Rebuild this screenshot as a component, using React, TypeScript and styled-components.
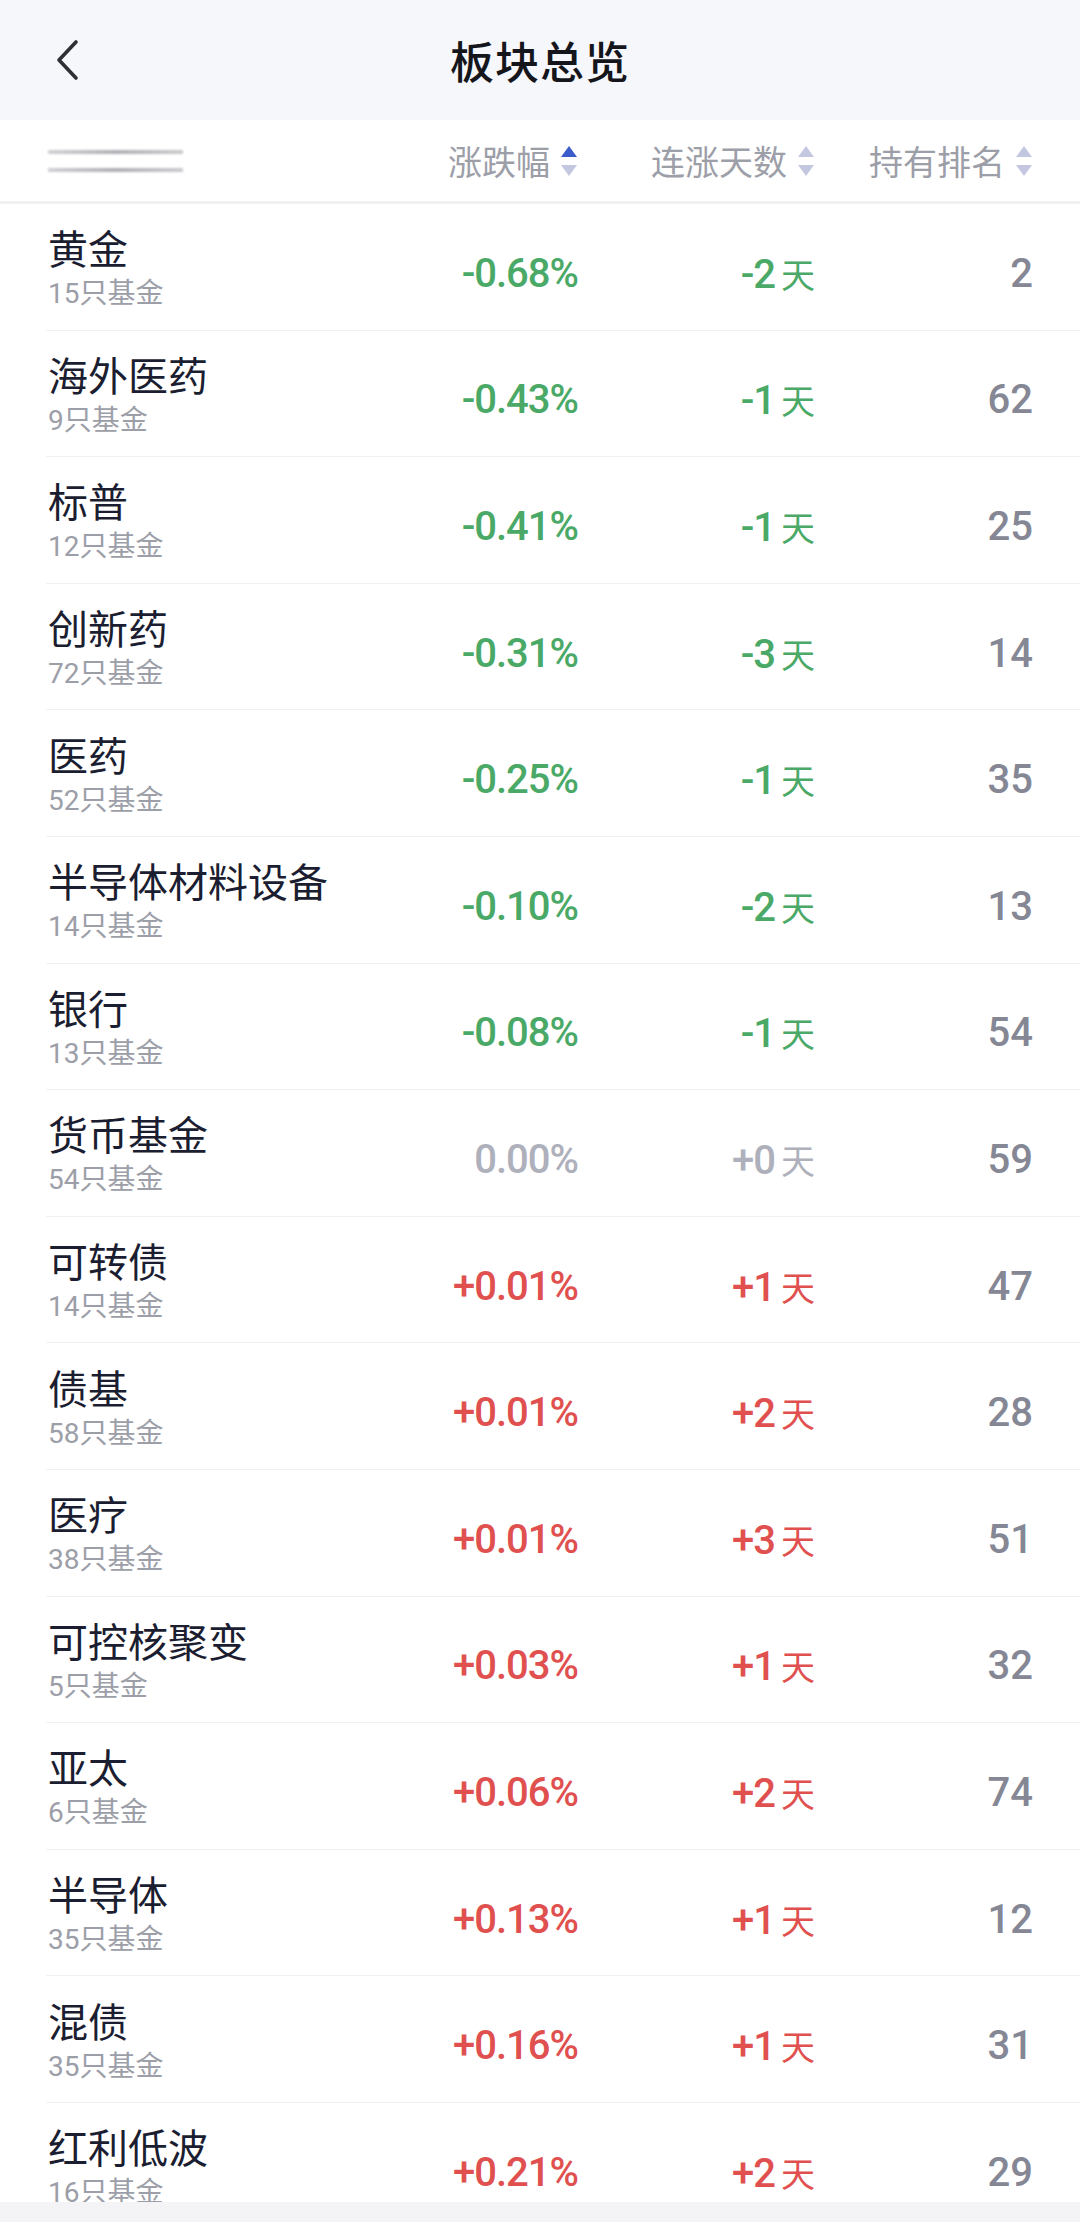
import styled, { createGlobalStyle } from "styled-components";

const GlobalStyle = createGlobalStyle`
  html, body {
    margin: 0;
    padding: 0;
    background: #ffffff;
  }
  body {
    font-family: Roboto, "Noto Sans CJK SC", sans-serif;
  }
`;

type Trend = "down" | "flat" | "up";

interface Sector {
  name: string;
  funds: number;
  change: string;
  days: string;
  rank: number;
}

const sectors: Sector[] = [
  { name: "黄金", funds: 15, change: "-0.68%", days: "-2", rank: 2 },
  { name: "海外医药", funds: 9, change: "-0.43%", days: "-1", rank: 62 },
  { name: "标普", funds: 12, change: "-0.41%", days: "-1", rank: 25 },
  { name: "创新药", funds: 72, change: "-0.31%", days: "-3", rank: 14 },
  { name: "医药", funds: 52, change: "-0.25%", days: "-1", rank: 35 },
  { name: "半导体材料设备", funds: 14, change: "-0.10%", days: "-2", rank: 13 },
  { name: "银行", funds: 13, change: "-0.08%", days: "-1", rank: 54 },
  { name: "货币基金", funds: 54, change: "0.00%", days: "+0", rank: 59 },
  { name: "可转债", funds: 14, change: "+0.01%", days: "+1", rank: 47 },
  { name: "债基", funds: 58, change: "+0.01%", days: "+2", rank: 28 },
  { name: "医疗", funds: 38, change: "+0.01%", days: "+3", rank: 51 },
  { name: "可控核聚变", funds: 5, change: "+0.03%", days: "+1", rank: 32 },
  { name: "亚太", funds: 6, change: "+0.06%", days: "+2", rank: 74 },
  { name: "半导体", funds: 35, change: "+0.13%", days: "+1", rank: 12 },
  { name: "混债", funds: 35, change: "+0.16%", days: "+1", rank: 31 },
  { name: "红利低波", funds: 16, change: "+0.21%", days: "+2", rank: 29 },
];

const trendColor: Record<Trend, string> = {
  down: "#4aa967",
  flat: "#aeb0bb",
  up: "#e0504f",
};

const trendOf = (v: string): Trend =>
  v.startsWith("-") ? "down" : v.startsWith("+") && !/^\+0(\.00%)?$/.test(v) ? "up" : "flat";

const Page = styled.div`
  width: 1080px;
  height: 2222px;
  display: flex;
  flex-direction: column;
  overflow: hidden;
  background: #ffffff;
`;

const NavBar = styled.div`
  height: 120px;
  flex-shrink: 0;
  background: #f6f7fa;
  display: grid;
  grid-template-columns: 120px 1fr 120px;
  align-items: center;
`;

const BackButton = styled.div`
  display: flex;
  align-items: center;
  padding-left: 54px;
  height: 100%;
`;

const Title = styled.h1`
  margin: 0;
  text-align: center;
  font-family: "Noto Sans CJK SC", sans-serif;
  font-size: 44px;
  font-weight: 500;
  color: #15161c;
  letter-spacing: 1px;
`;

const Grid = styled.div`
  display: grid;
  grid-template-columns: 1fr 230px 237px 218px;
  align-items: center;
  padding: 0 47px 0 48px;
  box-sizing: border-box;
`;

const HeaderRow = styled(Grid)`
  height: 84px;
  flex-shrink: 0;
  border-bottom: 3px solid #f1f1f4;
`;

const Blurred = styled.div`
  width: 135px;
  display: flex;
  flex-direction: column;
  gap: 14px;
  filter: blur(1.2px);
`;

const BlurLine = styled.div`
  height: 4px;
  background: linear-gradient(90deg, #bcbcc2, #8d8d94 50%, #b4b4ba);
  opacity: 0.7;
`;

const HeadCell = styled.div`
  display: flex;
  justify-content: flex-end;
  align-items: center;
  gap: 10px;
  font-family: "Noto Sans CJK SC", sans-serif;
  font-size: 34px;
  color: #9c9ea8;
`;

const SortIcon = styled.svg`
  width: 18px;
  height: 30px;
  flex-shrink: 0;
`;

const List = styled.div`
  flex: 1;
  overflow: hidden;
`;

const Row = styled(Grid)`
  height: 126.6px;
  position: relative;
  &::after {
    content: "";
    position: absolute;
    left: 46px;
    right: 0;
    bottom: 0;
    height: 1px;
    background: #f0f0f3;
  }
`;

const NameCell = styled.div`
  display: flex;
  flex-direction: column;
  gap: 8px;
`;

const Name = styled.div`
  font-family: "Noto Sans CJK SC", sans-serif;
  font-size: 40px;
  line-height: 46px;
  color: #1b1d30;
  white-space: nowrap;
`;

const FundCount = styled.div`
  font-family: Roboto, "Noto Sans CJK SC", sans-serif;
  font-size: 28px;
  line-height: 32px;
  color: #9c9ea8;
`;

const Value = styled.div<{ $trend: Trend }>`
  text-align: right;
  font-family: Roboto, "Noto Sans CJK SC", sans-serif;
  font-size: 40px;
  font-weight: 500;
  letter-spacing: -1px;
  color: ${(p) => trendColor[p.$trend]};
  padding-top: 12px;
`;

const DayUnit = styled.span`
  font-family: "Noto Sans CJK SC", sans-serif;
  font-size: 34px;
  font-weight: 400;
  letter-spacing: 0;
  margin-left: 6px;
`;

const Rank = styled.div`
  text-align: right;
  font-family: Roboto, sans-serif;
  font-size: 40px;
  font-weight: 500;
  color: #858795;
  padding-top: 12px;
`;

const BottomBar = styled.div`
  height: 20px;
  flex-shrink: 0;
  background: #f4f4f6;
`;

const Sort = ({ active }: { active?: boolean }) => (
  <SortIcon viewBox="0 0 18 30">
    <path d="M9 0 L17 11 H1 Z" fill={active ? "#3d5ccc" : "#c4c7e0"} />
    <path d="M1 19 H17 L9 30 Z" fill="#c4c7e0" />
  </SortIcon>
);

const App = () => {
  return (
    <>
      <GlobalStyle />
      <Page>
        <NavBar>
          <BackButton>
            <svg width="26" height="42" viewBox="0 0 26 42">
              <path
                d="M22 3 L5 21 L22 39"
                fill="none"
                stroke="#2f3036"
                strokeWidth="3.6"
                strokeLinecap="round"
                strokeLinejoin="round"
              />
            </svg>
          </BackButton>
          <Title>板块总览</Title>
          <div />
        </NavBar>

        <HeaderRow>
          <Blurred>
            <BlurLine />
            <BlurLine />
          </Blurred>
          <HeadCell>
            涨跌幅
            <Sort active />
          </HeadCell>
          <HeadCell>
            连涨天数
            <Sort />
          </HeadCell>
          <HeadCell>
            持有排名
            <Sort />
          </HeadCell>
        </HeaderRow>

        <List>
          {sectors.map((s) => (
            <Row key={s.name}>
              <NameCell>
                <Name>{s.name}</Name>
                <FundCount>{s.funds}只基金</FundCount>
              </NameCell>
              <Value $trend={trendOf(s.change)}>{s.change}</Value>
              <Value $trend={trendOf(s.days)}>
                {s.days}
                <DayUnit>天</DayUnit>
              </Value>
              <Rank>{s.rank}</Rank>
            </Row>
          ))}
        </List>

        <BottomBar />
      </Page>
    </>
  );
};

export default App;
